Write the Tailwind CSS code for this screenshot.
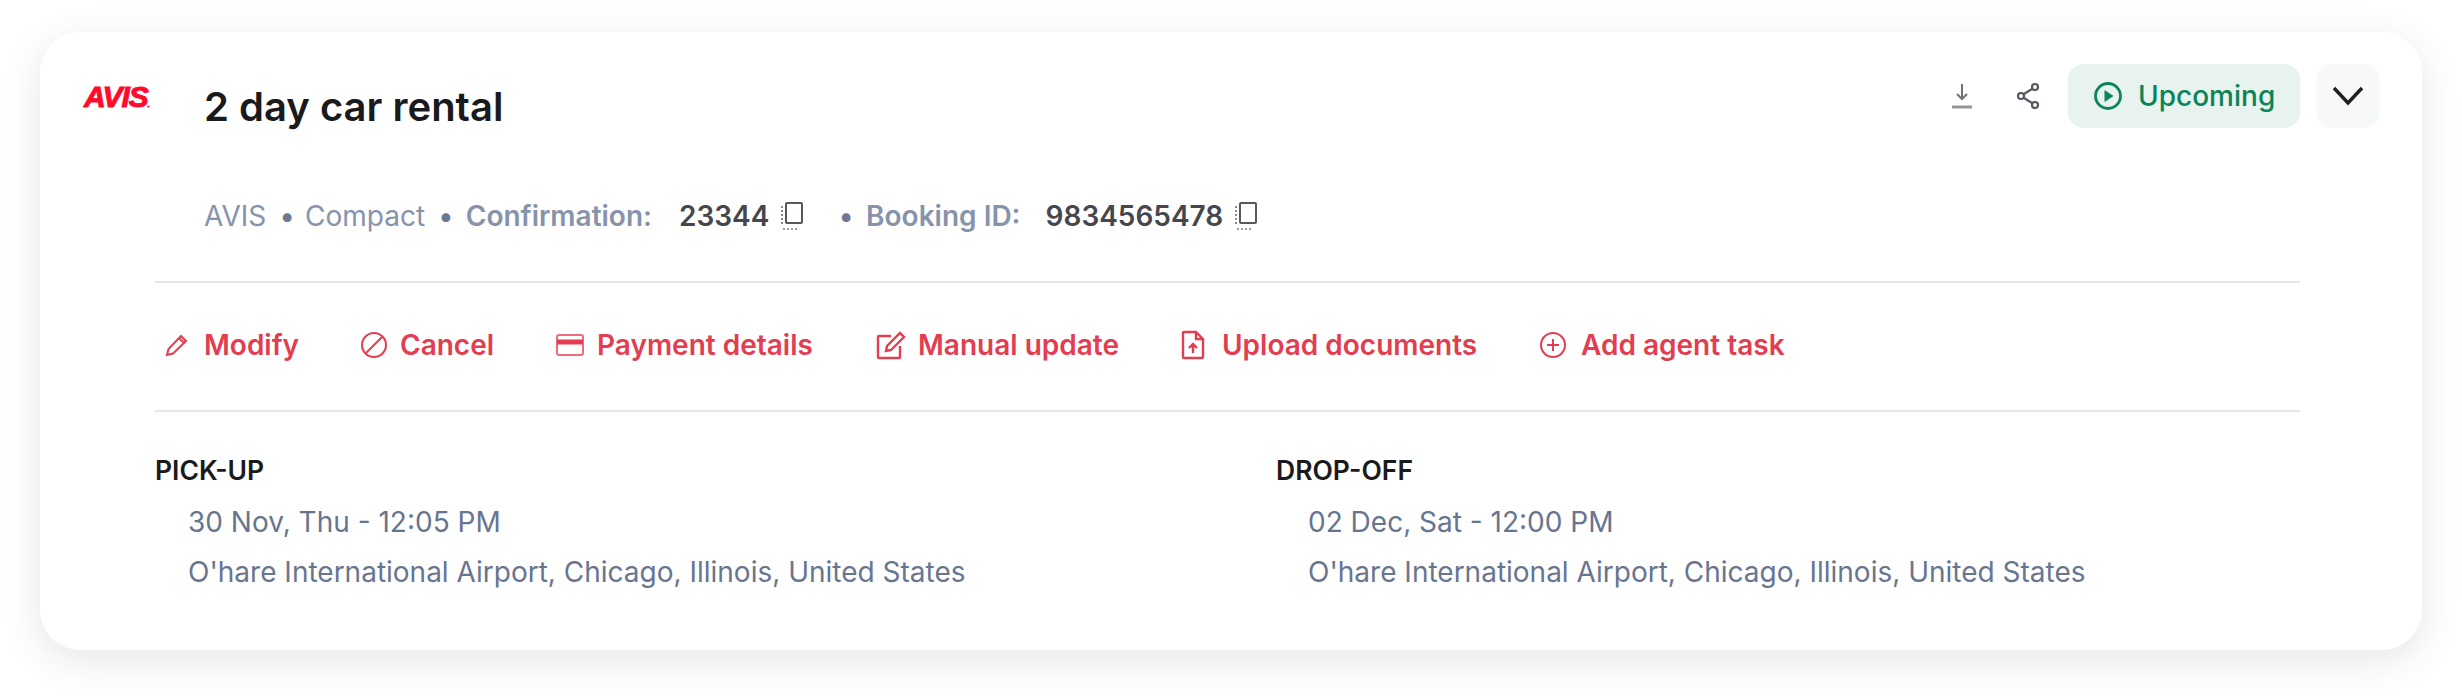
<!doctype html>
<html><head><meta charset="utf-8"><script src="https://cdn.jsdelivr.net/npm/@tailwindcss/browser@4"></script></head>
<body class="bg-white m-0">
<div class="w-[2462px] h-[698px] overflow-hidden pt-[32px] pl-[40px] font-['Inter',sans-serif]">
<div class="w-[2382px] h-[618px] bg-white rounded-[40px] shadow-[0_10px_40px_rgba(0,0,0,0.10)] relative pt-[32px]">
  <div class="flex items-start pl-[44px] pr-[42px] h-[64px]">
    <div class="w-[120px] shrink-0 pt-[19px] h-[64px]"><span class="block font-['Liberation_Sans',sans-serif] font-bold italic text-[30px] leading-[28px] tracking-[-1px] [-webkit-text-stroke:1px_#ff0a2b] text-[#ff0a2b]">AVIS<span class="text-[6px]">.</span></span></div>
    <h1 class="text-[40px] leading-[64px] font-semibold text-[#1a1a1c] mt-[11px]">2 day car rental</h1>
    <div class="ml-auto flex items-center h-[64px]">
      <svg class="w-[22px] h-[26px] text-[#6f7278] mr-[43px]" viewBox="0 0 22 26" fill="none" stroke="currentColor" stroke-width="2"><path d="M11 1v15M6 11l5 5 5-5"/><path d="M1 24h20" stroke-width="3" stroke-opacity=".75"/></svg>
      <svg class="w-[24px] h-[30px] text-[#55585e] mr-[28px]" viewBox="0 0 24 30" fill="none" stroke="currentColor" stroke-width="2.200"><circle cx="19" cy="6" r="3"/><circle cx="19" cy="24" r="3"/><circle cx="5" cy="15" r="3"/><path d="M8 13l8-5M8 17l8 5"/></svg>
      <div class="w-[232px] h-[64px] rounded-[16px] bg-[#e8f2ee] flex items-center pl-[26px] text-[#0b8457] text-[28px] font-medium">
        <svg class="w-[28px] h-[28px] mr-[16px]" viewBox="0 0 28 28" fill="none" stroke="currentColor" stroke-width="2.800"><circle cx="14" cy="14" r="12.500"/><path d="M10.500 8l9 6-9 6z" fill="currentColor" stroke="none"/></svg>Upcoming</div>
      <div class="w-[64px] h-[64px] rounded-[16px] bg-[#f7f8fa] ml-[16px] flex items-center justify-center">
        <svg class="w-[32px] h-[20px] text-[#1f2023]" viewBox="0 0 32 20" fill="none" stroke="currentColor" stroke-width="3.500"><path d="M2 2l14 15L30 2"/></svg>
      </div>
    </div>
  </div>
  <div class="flex items-center pl-[164px] mt-[72px] h-[32px] text-[28px] text-[#8693ab] whitespace-nowrap">
    <span>AVIS</span><span class="ml-[13px] mr-[10px] text-[#6c7a96]">•</span><span>Compact</span><span class="ml-[13px] mr-[12px] text-[#6c7a96]">•</span><span class="font-semibold">Confirmation:</span>
    <span class="ml-[27px] font-semibold text-[#45474d]">23344</span>
    <svg class="w-[24px] h-[30px] ml-[11px] text-[#55585e]" viewBox="0 0 24 30" fill="none" stroke="currentColor" stroke-width="2"><rect x="6" y="2" width="16" height="20" rx="1"/><path d="M2 5v18" stroke-dasharray="2 2" stroke-opacity=".7"/><path d="M3 28h16" stroke-dasharray="2 2" stroke-opacity=".6"/></svg>
    <span class="ml-[34px] mr-[12px] text-[#6c7a96]">•</span><span class="font-semibold">Booking ID:</span>
    <span class="ml-[25px] font-semibold text-[#45474d]">9834565478</span>
    <svg class="w-[24px] h-[30px] ml-[11px] text-[#55585e]" viewBox="0 0 24 30" fill="none" stroke="currentColor" stroke-width="2"><rect x="6" y="2" width="16" height="20" rx="1"/><path d="M2 5v18" stroke-dasharray="2 2" stroke-opacity=".7"/><path d="M3 28h16" stroke-dasharray="2 2" stroke-opacity=".6"/></svg>
  </div>
  <div class="ml-[115px] w-[2145px] mt-[49px] border-t-2 border-[#e6e6e6]"></div>
  <div class="ml-[125px] h-[127px] pb-[3px] flex items-center text-[28px] font-semibold text-[#e23d50] whitespace-nowrap">
    <span class="flex items-center w-[195px]"><svg class="w-[24px] h-[24px] mr-[15px]" viewBox="0 0 24 24" fill="none" stroke="currentColor" stroke-width="2"><path d="M2 22l1.500-6L16 3l5 5L8 20.500z"/><path d="M14 5l5 5" /></svg>Modify</span>
    <span class="flex items-center w-[195px]"><svg class="w-[28px] h-[28px] mr-[12px]" viewBox="0 0 28 28" fill="none" stroke="currentColor" stroke-width="2"><circle cx="14" cy="14" r="12"/><path d="M6 22L22 6"/></svg>Cancel</span>
    <span class="flex items-center w-[321px]"><svg class="w-[30px] h-[24px] mr-[12px]" viewBox="0 0 30 24" fill="none" stroke="currentColor" stroke-width="2"><rect x="2" y="2" width="26" height="20" rx="2" stroke-opacity=".75"/><path d="M2 9h26" stroke-width="5"/></svg>Payment details</span>
    <span class="flex items-center w-[305px]"><svg class="w-[30px] h-[30px] mr-[12px]" viewBox="0 0 30 30" fill="none" stroke="currentColor" stroke-width="2.400"><path d="M15 6H3a1 1 0 0 0-1 1v20a1 1 0 0 0 1 1h20a1 1 0 0 0 1-1V16"/><path d="M10 21l1-5L24 3l4 4-13 13z"/></svg>Manual update</span>
    <span class="flex items-center w-[358px]"><svg class="w-[24px] h-[30px] mr-[17px]" viewBox="0 0 24 30" fill="none" stroke="currentColor" stroke-width="2.400"><path d="M3 2h12l7 7v18a1 1 0 0 1-1 1H3a1 1 0 0 1-1-1V3a1 1 0 0 1 1-1z"/><path d="M15 2v7h7M12 23v-9M8 18l4-4 4 4"/></svg>Upload documents</span>
    <span class="flex items-center"><svg class="w-[28px] h-[28px] mr-[14px]" viewBox="0 0 28 28" fill="none" stroke="currentColor" stroke-width="2"><circle cx="14" cy="14" r="12"/><path d="M14 8v12M8 14h12"/></svg>Add agent task</span>
  </div>
  <div class="ml-[115px] w-[2145px] border-t-2 border-[#e6e6e6]"></div>
  <div class="ml-[115px] mt-[42px] flex text-[28px] text-[#68758f]">
    <div class="w-[1121px]">
      <div class="text-[26.500px] leading-[32px] font-semibold text-[#1a1a1c]">PICK-UP</div>
      <div class="pl-[33px] mt-[20px] leading-[32px]">30 Nov, Thu - 12:05 PM</div>
      <div class="pl-[33px] mt-[18px] leading-[32px]">O'hare International Airport, Chicago, Illinois, United States</div>
    </div>
    <div>
      <div class="text-[26.500px] leading-[32px] font-semibold text-[#1a1a1c]">DROP-OFF</div>
      <div class="pl-[32px] mt-[20px] leading-[32px]">02 Dec, Sat - 12:00 PM</div>
      <div class="pl-[32px] mt-[18px] leading-[32px]">O'hare International Airport, Chicago, Illinois, United States</div>
    </div>
  </div>
</div>
</div>
</body></html>
